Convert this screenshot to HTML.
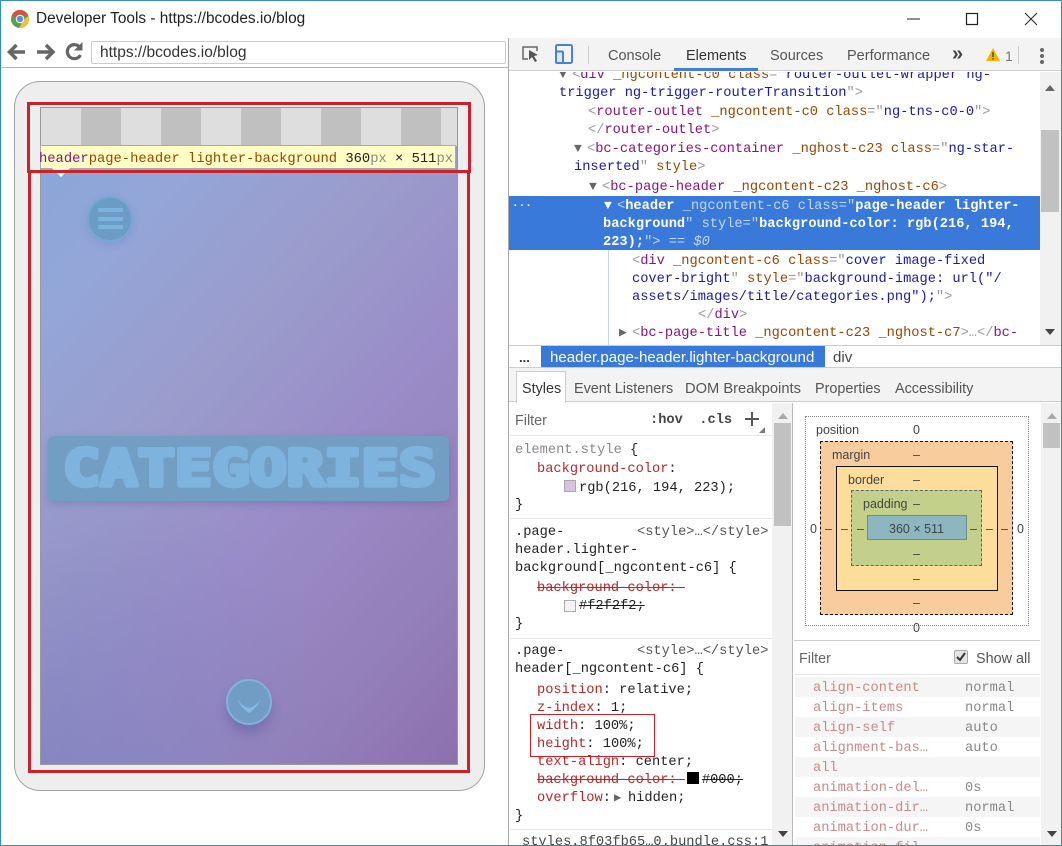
<!DOCTYPE html>
<html><head><meta charset="utf-8">
<style>
html,body{margin:0;padding:0;background:#fff}
#p{position:relative;width:1062px;height:846px;overflow:hidden;background:#fff;font-family:"Liberation Sans",sans-serif;color:#333}
#p div{position:absolute;box-sizing:border-box}
.m,.s{white-space:pre;line-height:18px}
.m{font-family:"Liberation Mono",monospace;font-size:13.7px;color:#222;margin-top:2px}
.s{font-size:14px;color:#555;margin-top:1px}
.n{color:#881280}.a{color:#994500}.v{color:#1a1aa6}.g{color:#999}
.r{color:#b02a2a}.c{color:#888}
.w{color:#fff;font-weight:bold}.wa{color:#c4d8f5}
.st{text-decoration:line-through}
.t{display:inline-block;width:13px;color:#666;font-size:13px;line-height:14px}
.bx{font-size:12.5px;color:#444;line-height:14px;text-align:center;white-space:pre}
.row{left:795px;width:245px;height:20px}
.row.o{background:#f5f5f5}
</style></head><body><div id="p">

<!-- title bar -->
<svg style="position:absolute;left:10px;top:9px" width="20" height="20" viewBox="0 0 20 20">
<circle cx="10" cy="10" r="9" fill="#5a9e4e"/>
<path d="M10 1a9 9 0 0 1 8.4 5.6H10z M10 1A9 9 0 0 0 2.3 5.4L6 11z" fill="#d9503f"/>
<path d="M18.4 6.6A9 9 0 0 1 9 19l4-7z" fill="#f0c23c"/>
<circle cx="10" cy="10" r="4.3" fill="#fff"/><circle cx="10" cy="10" r="3.2" fill="#5b8fdc"/>
</svg>
<div class="s" style="left:36px;top:9px;color:#222;font-size:15.4px">Developer Tools - https://bcodes.io/blog</div>
<svg style="position:absolute;left:900px;top:6px" width="150" height="26" viewBox="0 0 150 26">
<path d="M7 13h13" stroke="#222" stroke-width="1" fill="none"/>
<rect x="66.500" y="7.500" width="11" height="11" fill="none" stroke="#222" stroke-width="1.200"/>
<path d="M125 7l12 12M137 7l-12 12" stroke="#222" stroke-width="1" fill="none"/>
</svg>

<!-- browser toolbar -->
<svg style="position:absolute;left:5px;top:41px" width="84" height="22" viewBox="0 0 84 22">
<path d="M20 11H5M11.500 4l-7 7 7 7" stroke="#666" stroke-width="3.500" fill="none"/>
<path d="M32 11h15M41 4l7 7-7 7" stroke="#666" stroke-width="3.500" fill="none"/>
<path d="M75 6.500A7 7 0 1 0 75.500 14" stroke="#666" stroke-width="3.200" fill="none"/>
<path d="M69 9.500h8.500V1z" fill="#666"/>
</svg>
<div style="left:91px;top:41px;width:415px;height:23px;border:1px solid #ccc;border-radius:2px"></div>
<div class="s" style="left:100px;top:43px;color:#333;font-size:15.5px">https://bcodes.io/blog</div>
<div style="left:0;top:67px;width:509px;height:1px;background:#b5b5b5"></div>

<!-- device frame -->
<div style="left:14px;top:81px;width:471px;height:710px;background:#eee;border:1px solid #a3a3a3;border-radius:26px"></div>
<div style="left:40px;top:107px;width:418px;height:658px;background:radial-gradient(ellipse 320px 300px at 0% 100%,rgba(128,132,190,.75),rgba(128,132,190,0)),linear-gradient(132deg,#86a6d9 0%,#93a6d8 18%,#9a9ccc 40%,#9a8cc8 60%,#9480ba 82%,#8c70ae 100%);border:1px solid #999"></div>
<svg style="position:absolute;left:41px;top:108px" width="416" height="38" viewBox="0 0 416 38">
<rect width="416" height="38" fill="#dedede"/>
<rect x="40" width="40" height="38" fill="#c0c0c0"/><rect x="120" width="40" height="38" fill="#c0c0c0"/><rect x="200" width="40" height="38" fill="#c0c0c0"/><rect x="280" width="40" height="38" fill="#c0c0c0"/><rect x="360" width="40" height="38" fill="#c0c0c0"/>
</svg>
<div style="left:40px;top:145px;width:416px;height:24px;background:#ffffc6;border:1px solid #aaa"></div>
<svg style="position:absolute;left:52px;top:168px" width="18" height="10" viewBox="0 0 18 10"><path d="M0 0h18l-9 9z" fill="#ffffd8"/></svg>
<div class="m" style="left:39px;top:149px;font-size:13.8px"><span class="n">header</span><span class="a">page-header lighter-background</span> 360<span style="color:#888">px</span> × 511<span style="color:#888">px</span></div>

<!-- hamburger -->
<div style="left:87px;top:196px;width:46px;height:46px;border-radius:50%;background:#6a9cc4;border:2px solid #73a9d4;box-shadow:0 3px 8px rgba(60,80,140,.15)"></div>
<div style="left:98px;top:208px;width:25px;height:4px;background:#7ab3dd"></div>
<div style="left:98px;top:217px;width:25px;height:4px;background:#7ab3dd"></div>
<div style="left:98px;top:225px;width:25px;height:4px;background:#7ab3dd"></div>

<!-- categories -->
<div style="left:48px;top:436px;width:401px;height:65px;background:#739ec4;border-radius:5px;box-shadow:0 3px 8px rgba(60,70,140,.25)"></div>
<svg style="position:absolute;left:48px;top:436px" width="401" height="65" viewBox="0 0 401 65">
<text x="15" y="49.500" textLength="373" lengthAdjust="spacingAndGlyphs" font-family="DejaVu Sans Mono" font-weight="bold" font-size="50" fill="#7eb3de" stroke="#7eb3de" stroke-width="4.500" stroke-linejoin="round">CATEGORIES</text>
</svg>

<!-- chevron -->
<div style="left:226px;top:679px;width:46px;height:46px;border-radius:50%;background:#719cc4;border:2px solid #7eb3dc;box-shadow:0 8px 10px rgba(60,70,140,.3)"></div>
<svg style="position:absolute;left:234px;top:695px" width="30" height="20" viewBox="0 0 30 20"><path d="M3 3Q6 12 15 18Q24 12 27 3Q23 11 15 13Q7 11 3 3z" fill="#82bbe4"/></svg>

<!-- red rectangles -->
<div style="left:27px;top:102px;width:444px;height:71px;border:3px solid #c8232c"></div>
<div style="left:28px;top:170px;width:442px;height:603px;border:3px solid #c8232c;border-top:none"></div>

<!-- devtools -->
<div style="left:508px;top:38px;width:1px;height:808px;background:#a8a8a8"></div>
<div style="left:509px;top:38px;width:552px;height:33px;background:#f3f3f3;border-bottom:1px solid #ccc"></div>
<svg style="position:absolute;left:520px;top:42px" width="60" height="26" viewBox="0 0 60 26">
<path d="M8 17H3V5h14v4" stroke="#666" stroke-width="1.500" fill="none"/>
<path d="M9 8l9 5-4 1 3 5-2 1-3-5-3 3z" fill="#555"/>
<rect x="36" y="3" width="16" height="18" rx="1.500" fill="none" stroke="#4a82d0" stroke-width="2"/>
<rect x="36" y="9.500" width="7" height="11.500" rx="1" fill="#dbe7f6" stroke="#4a82d0" stroke-width="2"/>
</svg>
<div style="left:588px;top:46px;width:1px;height:18px;background:#ccc"></div>
<div class="s" style="left:608px;top:46px;font-size:14.500px;color:#555">Console</div>
<div class="s" style="left:686px;top:46px;font-size:14.500px;color:#333">Elements</div>
<div style="left:674px;top:68px;width:84px;height:3px;background:#3f7fd8"></div>
<div class="s" style="left:770px;top:46px;font-size:14.500px;color:#555">Sources</div>
<div class="s" style="left:847px;top:46px;font-size:14.500px;color:#555">Performance</div>
<div class="s" style="left:952px;top:44px;font-size:20px;color:#444;font-weight:bold">»</div>
<svg style="position:absolute;left:986px;top:48px" width="14" height="13" viewBox="0 0 14 13"><path d="M7 0l7 13H0z" fill="#f4b400"/><path d="M6.300 4h1.400v5H6.300zM6.300 10h1.400v1.500H6.300z" fill="#5a4500"/></svg>
<div class="s" style="left:1005px;top:46px;font-size:14px;color:#777">1</div>
<div style="left:1018px;top:46px;width:1px;height:18px;background:#ccc"></div>
<svg style="position:absolute;left:1038px;top:47px" width="8" height="18" viewBox="0 0 8 18"><circle cx="4" cy="3" r="2" fill="#666"/><circle cx="4" cy="9" r="2" fill="#666"/><circle cx="4" cy="15" r="2" fill="#666"/></svg>

<!-- DOM tree -->
<div id="dom" style="left:509px;top:72px;width:531px;height:274px;overflow:hidden">
<div class="m" style="left:50px;top:-7px"><span class="t">▼</span><span class="g">&lt;</span><span class="n">div</span> <span class="a">_ngcontent-c0 class</span><span class="g">="</span><span class="v">router-outlet-wrapper ng-</span></div>
<div class="m" style="left:50px;top:11px"><span class="v">trigger ng-trigger-routerTransition</span><span class="g">"&gt;</span></div>
<div class="m" style="left:79px;top:30px"><span class="g">&lt;</span><span class="n">router-outlet</span> <span class="a">_ngcontent-c0 class</span><span class="g">="</span><span class="v">ng-tns-c0-0</span><span class="g">"&gt;</span></div>
<div class="m" style="left:79px;top:48px"><span class="g">&lt;/</span><span class="n">router-outlet</span><span class="g">&gt;</span></div>
<div class="m" style="left:65px;top:67px"><span class="t">▼</span><span class="g">&lt;</span><span class="n">bc-categories-container</span> <span class="a">_nghost-c23 class</span><span class="g">="</span><span class="v">ng-star-</span></div>
<div class="m" style="left:65px;top:85px"><span class="v">inserted</span><span class="g">"</span> <span class="a">style</span><span class="g">&gt;</span></div>
<div class="m" style="left:80px;top:105px"><span class="t">▼</span><span class="g">&lt;</span><span class="n">bc-page-header</span> <span class="a">_ngcontent-c23 _nghost-c6</span><span class="g">&gt;</span></div>
<div style="left:0;top:124px;width:531px;height:54px;background:#3879d9"></div>
<div class="m" style="left:3px;top:121px;color:#fff;font-weight:bold;font-size:11px">...</div>
<div class="m" style="left:95px;top:124px;color:#fff"><span class="t" style="color:#fff">▼</span><span class="wa">&lt;</span><span class="w">header</span> <span class="wa">_ngcontent-c6 class="</span><span class="w">page-header lighter-</span></div>
<div class="m" style="left:94px;top:142px"><span class="w">background</span><span class="wa">" style="</span><span class="w">background-color: rgb(216, 194,</span></div>
<div class="m" style="left:94px;top:160px"><span class="w">223);</span><span class="wa">"&gt; == <i>$0</i></span></div>
<div style="left:99px;top:178px;width:1px;height:96px;background:#c6d6ea"></div>
<div class="m" style="left:123px;top:179px"><span class="g">&lt;</span><span class="n">div</span> <span class="a">_ngcontent-c6 class</span><span class="g">="</span><span class="v">cover image-fixed</span></div>
<div class="m" style="left:123px;top:197px"><span class="v">cover-bright</span><span class="g">"</span> <span class="a">style</span><span class="g">="</span><span class="v">background-image: url("/</span></div>
<div class="m" style="left:123px;top:215px"><span class="v">assets/images/title/categories.png");</span><span class="g">"&gt;</span></div>
<div class="m" style="left:189px;top:233px"><span class="g">&lt;/</span><span class="n">div</span><span class="g">&gt;</span></div>
<div class="m" style="left:110px;top:251px"><span class="t">▶</span><span class="g">&lt;</span><span class="n">bc-page-title</span> <span class="a">_ngcontent-c23 _nghost-c7</span><span class="g">&gt;…&lt;/</span><span class="n">bc-</span></div>
</div>
<!-- DOM scrollbar -->
<div style="left:1040px;top:72px;width:21px;height:274px;background:#f1f1f1"></div>
<div style="left:1041px;top:130px;width:18px;height:82px;background:#c1c1c1"></div>
<svg style="position:absolute;left:1044px;top:84px" width="12" height="8"><path d="M1 7h10L6 1z" fill="#666"/></svg>
<svg style="position:absolute;left:1044px;top:328px" width="12" height="8"><path d="M1 1h10L6 7z" fill="#444"/></svg>

<!-- breadcrumb -->
<div style="left:509px;top:345px;width:552px;height:1px;background:#ccc"></div>
<div class="s" style="left:519px;top:348px;color:#333;font-weight:bold;font-size:13px">...</div>
<div style="left:541px;top:346px;width:284px;height:21px;background:#3879d9"></div>
<div class="s" style="left:550px;top:348px;color:#fff;font-size:15.100px">header.page-header.lighter-background</div>
<div class="s" style="left:833px;top:348px;color:#444;font-size:15.100px">div</div>
<div style="left:509px;top:367px;width:552px;height:1px;background:#ccc"></div>

<!-- tabs -->
<div style="left:509px;top:368px;width:552px;height:34px;background:#f3f3f3;border-bottom:1px solid #ccc"></div>
<div style="left:516px;top:371px;width:50px;height:32px;background:#fff;border:1px solid #ccc;border-bottom:none"></div>
<div class="s" style="left:522px;top:379px;font-size:14.400px;color:#333">Styles</div>
<div class="s" style="left:574px;top:379px;font-size:14.400px">Event Listeners</div>
<div class="s" style="left:685px;top:379px;font-size:14.700px">DOM Breakpoints</div>
<div class="s" style="left:815px;top:379px;font-size:14.400px">Properties</div>
<div class="s" style="left:895px;top:379px;font-size:14.400px">Accessibility</div>

<!-- styles -->
<div class="s" style="left:515px;top:411px;color:#666;font-size:14.400px">Filter</div>
<div class="m" style="left:650px;top:410px;font-weight:bold;color:#444">:hov  .cls</div>
<svg style="position:absolute;left:744px;top:411px" width="24" height="24" viewBox="0 0 24 24"><path d="M8 1v14M1 8h14" stroke="#555" stroke-width="2"/><path d="M21 16v6h-6z" fill="#777"/></svg>
<div style="left:510px;top:435px;width:263px;height:1px;background:#e6e6e6"></div>

<div class="m" style="left:515px;top:440px"><span class="c">element.style</span> {</div>
<div class="m r" style="left:537px;top:459px">background-color<span style="color:#222">:</span></div>
<div style="left:564px;top:480px;width:12px;height:12px;background:#d8c2df;border:1px solid #aaa"></div>
<div class="m" style="left:579px;top:478px">rgb(216, 194, 223);</div>
<div class="m" style="left:515px;top:495px">}</div>
<div style="left:510px;top:518px;width:263px;height:1px;background:#e6e6e6"></div>

<div class="m" style="left:515px;top:522px">.page-</div>
<div class="m" style="left:637px;top:522px;color:#555">&lt;style&gt;…&lt;/style&gt;</div>
<div class="m" style="left:515px;top:540px">header.lighter-</div>
<div class="m" style="left:515px;top:558px">background[_ngcontent-c6] {</div>
<div class="m r st" style="left:537px;top:578px">background-color: </div>
<div style="left:564px;top:600px;width:12px;height:12px;background:#f2f2f2;border:1px solid #aaa"></div>
<div class="m st" style="left:579px;top:596px">#f2f2f2;</div>
<div class="m" style="left:515px;top:614px">}</div>
<div style="left:510px;top:638px;width:263px;height:1px;background:#e6e6e6"></div>

<div class="m" style="left:515px;top:641px">.page-</div>
<div class="m" style="left:637px;top:641px;color:#555">&lt;style&gt;…&lt;/style&gt;</div>
<div class="m" style="left:515px;top:659px">header[_ngcontent-c6] {</div>
<div class="m" style="left:537px;top:680px"><span class="r">position</span>: relative;</div>
<div class="m" style="left:537px;top:698px"><span class="r">z-index</span>: 1;</div>
<div class="m" style="left:537px;top:716px"><span class="r">width</span>: 100%;</div>
<div class="m" style="left:537px;top:734px"><span class="r">height</span>: 100%;</div>
<div class="m" style="left:537px;top:752px"><span class="r">text-align</span>: center;</div>
<div class="m" style="left:537px;top:770px"><span class="r st">background-color: </span><span style="display:inline-block;width:12px;height:12px;background:#000;vertical-align:-1px;margin-left:2px;margin-right:3px"></span><span class="st">#000;</span></div>
<div class="m" style="left:537px;top:788px"><span class="r">overflow</span>:<span class="t" style="width:17px;font-size:12px;padding-left:3px;box-sizing:border-box">▶</span>hidden;</div>
<div class="m" style="left:515px;top:806px">}</div>
<div style="left:530px;top:714px;width:125px;height:43px;border:1px solid #c8232c"></div>
<div style="left:510px;top:829px;width:263px;height:1px;background:#e6e6e6"></div>
<div class="m" style="left:522px;top:832px;color:#444">styles.8f03fb65…0.bundle.css:1</div>

<!-- styles scrollbar -->
<div style="left:772px;top:403px;width:20px;height:442px;background:#f1f1f1"></div>
<div style="left:774px;top:423px;width:17px;height:103px;background:#c1c1c1"></div>
<svg style="position:absolute;left:777px;top:412px" width="12" height="8"><path d="M1 7h10L6 1z" fill="#aaa"/></svg>
<svg style="position:absolute;left:777px;top:830px" width="12" height="8"><path d="M1 1h10L6 7z" fill="#444"/></svg>
<div style="left:792px;top:403px;width:1px;height:442px;background:#bbb"></div>

<!-- box model -->
<div style="left:805px;top:416px;width:224px;height:210px;border:1px dotted #888"></div>
<div style="left:820px;top:441px;width:193px;height:174px;background:#f9cc9d;border:1px dashed #111"></div>
<div style="left:836px;top:466px;width:162px;height:125px;background:#fddd9b;border:1px solid #111"></div>
<div style="left:851px;top:490px;width:131px;height:76px;background:#c3d08b;border:1px dashed #666"></div>
<div style="left:867px;top:515px;width:100px;height:25px;background:#8cb6c0;border:1px solid #6d8a92"></div>
<div class="bx" style="left:816px;top:423px">position</div>
<div class="bx" style="left:913px;top:423px">0</div>
<div class="bx" style="left:832px;top:448px">margin</div>
<div class="bx" style="left:913px;top:448px">–</div>
<div class="bx" style="left:848px;top:473px">border</div>
<div class="bx" style="left:913px;top:473px">–</div>
<div class="bx" style="left:863px;top:497px">padding</div>
<div class="bx" style="left:913px;top:497px">–</div>
<div class="bx" style="left:889px;top:522px">360 × 511</div>
<div class="bx" style="left:810px;top:522px">0</div>
<div class="bx" style="left:825px;top:522px">–</div>
<div class="bx" style="left:841px;top:522px">–</div>
<div class="bx" style="left:857px;top:522px">–</div>
<div class="bx" style="left:970px;top:522px">–</div>
<div class="bx" style="left:986px;top:522px">–</div>
<div class="bx" style="left:1001px;top:522px">–</div>
<div class="bx" style="left:1017px;top:522px">0</div>
<div class="bx" style="left:913px;top:547px">–</div>
<div class="bx" style="left:913px;top:572px">–</div>
<div class="bx" style="left:913px;top:596px">–</div>
<div class="bx" style="left:913px;top:621px">0</div>

<!-- box scrollbar -->
<div style="left:1041px;top:403px;width:20px;height:442px;background:#f1f1f1"></div>
<div style="left:1043px;top:423px;width:17px;height:25px;background:#c1c1c1"></div>
<svg style="position:absolute;left:1046px;top:412px" width="12" height="8"><path d="M1 7h10L6 1z" fill="#aaa"/></svg>
<svg style="position:absolute;left:1046px;top:830px" width="12" height="8"><path d="M1 1h10L6 7z" fill="#444"/></svg>

<!-- computed -->
<div style="left:794px;top:640px;width:246px;height:1px;background:#ccc"></div>
<div class="s" style="left:799px;top:649px;color:#666;font-size:14.400px">Filter</div>
<div style="left:954px;top:650px;width:14px;height:14px;background:#e4e4e4;border:1px solid #aaa;border-radius:2px"></div>
<svg style="position:absolute;left:955px;top:651px" width="12" height="12"><path d="M2 6l3 3 5-7" stroke="#333" stroke-width="2" fill="none"/></svg>
<div class="s" style="left:976px;top:649px;font-size:14.400px">Show all</div>
<div style="left:794px;top:674px;width:246px;height:1px;background:#e6e6e6"></div>
<div class="row o" style="top:677px"></div>
<div class="row o" style="top:717px"></div>
<div class="row o" style="top:757px"></div>
<div class="row o" style="top:797px"></div>
<div class="row o" style="top:837px"></div>
<div class="m" style="left:813px;top:678px;color:#c98a8a">align-content</div><div class="m" style="left:965px;top:678px;color:#888">normal</div>
<div class="m" style="left:813px;top:698px;color:#c98a8a">align-items</div><div class="m" style="left:965px;top:698px;color:#888">normal</div>
<div class="m" style="left:813px;top:718px;color:#c98a8a">align-self</div><div class="m" style="left:965px;top:718px;color:#888">auto</div>
<div class="m" style="left:813px;top:738px;color:#c98a8a">alignment-bas…</div><div class="m" style="left:965px;top:738px;color:#888">auto</div>
<div class="m" style="left:813px;top:758px;color:#c98a8a">all</div>
<div class="m" style="left:813px;top:778px;color:#c98a8a">animation-del…</div><div class="m" style="left:965px;top:778px;color:#888">0s</div>
<div class="m" style="left:813px;top:798px;color:#c98a8a">animation-dir…</div><div class="m" style="left:965px;top:798px;color:#888">normal</div>
<div class="m" style="left:813px;top:818px;color:#c98a8a">animation-dur…</div><div class="m" style="left:965px;top:818px;color:#888">0s</div>
<div class="m" style="left:813px;top:838px;color:#c98a8a">animation-fil…</div>

<!-- window border -->
<div style="left:0;top:0;width:1062px;height:846px;border:1px solid #2f8fb5;border-top-color:#3a8fb8"></div>
</div></body></html>
